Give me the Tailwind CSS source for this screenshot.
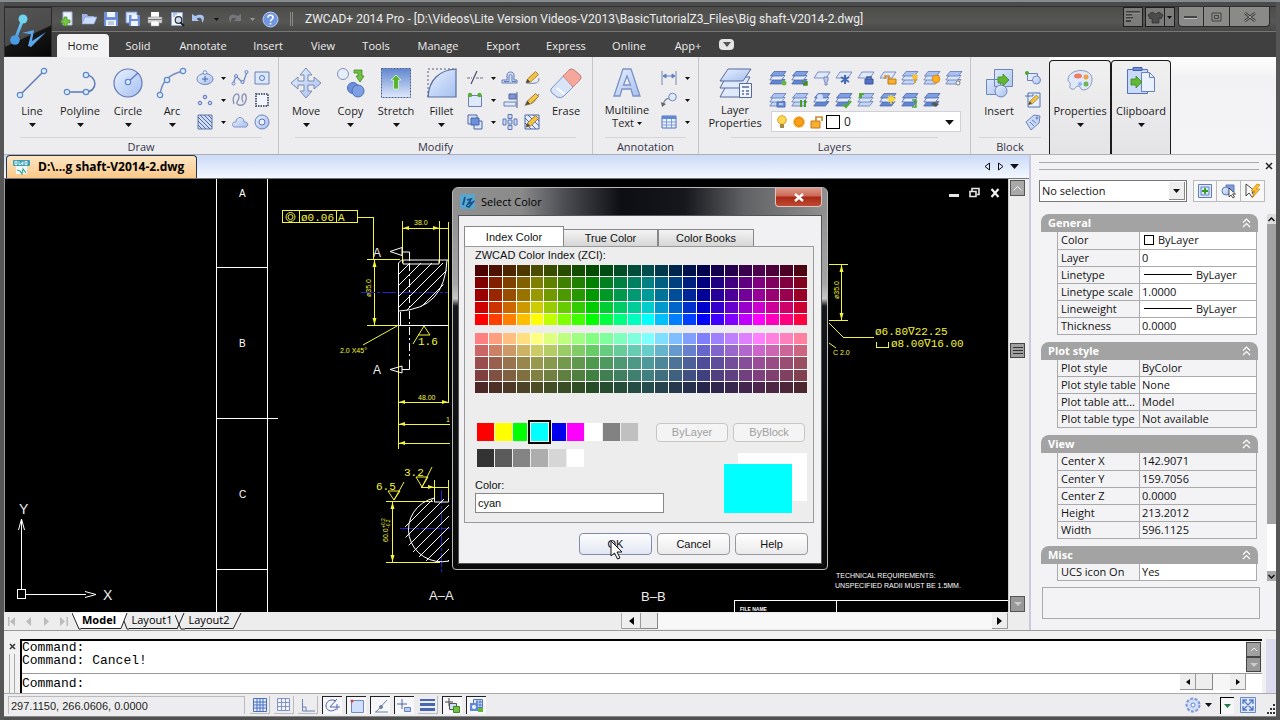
<!DOCTYPE html>
<html lang="en">
<head>
<meta charset="utf-8">
<title>ZWCAD+ 2014 Pro</title>
<script src="https://cdn.jsdelivr.net/npm/@tailwindcss/browser@4"></script>
</head>
<body class="bg-[#555] font-['Open_Sans',sans-serif] text-[11px] leading-4 text-[#1d1d1d]">

<!-- Shared icon parts -->
<svg class="absolute h-0 w-0 overflow-hidden" aria-hidden="true">
  <defs>
    <linearGradient id="gb" x1="0" y1="0" x2="1" y2="1"><stop offset="0" stop-color="#e8f0ff"/><stop offset="1" stop-color="#a6c0f0"/></linearGradient>
    <linearGradient id="gd" x1="0" y1="0" x2="0" y2="1"><stop offset="0" stop-color="#5f86cf"/><stop offset="1" stop-color="#dfe9fb"/></linearGradient>
    <linearGradient id="gz" x1="0" y1="0" x2="0" y2="1"><stop offset="0" stop-color="#6fd6f5"/><stop offset="1" stop-color="#4a93e0"/></linearGradient>
    <symbol id="dn" viewBox="0 0 7 4"><path d="M0 0h7L3.5 4z" fill="#111"/></symbol>
    <symbol id="stack" viewBox="0 0 18 18"><g stroke="#6478b0" stroke-width=".8"><path d="M4 10.500h12l-3.500 4.500H.8z" fill="#c4d5f7"/><path d="M4 6.500h12L12.500 11H.8z" fill="#d9e5fb"/><path d="M5 2.500h12L13.500 7H1.500z" fill="#a9c2f2"/></g></symbol>
    <symbol id="stackd" viewBox="0 0 18 18"><g stroke="#4f66a8" stroke-width=".8"><path d="M4 10.500h12l-3.500 4.500H.8z" fill="#5f86d4"/><path d="M4 6.500h12L12.500 11H.8z" fill="#e4edff"/><path d="M5 2.500h12L13.500 7H1.500z" fill="#7c9ee2"/></g></symbol>
    <symbol id="sheet" viewBox="0 0 18 18"><path d="M5 3h12l-4 6H1z" fill="#dfe9fc" stroke="#7d8fc4"/></symbol>
    <symbol id="pencil" viewBox="0 0 18 18"><path d="M3 14l1.500-4 8-7.500 3 3-8 7.500z" fill="#f5c443" stroke="#8b6a2a" stroke-width=".8"/><path d="M3 14l1.500-4 2.500 2.700z" fill="#4a4a4a"/></symbol>
    <symbol id="chev" viewBox="0 0 9 10"><path d="M1 4.500 4.500 1 8 4.500M1 9l3.500-3.500L8 9" fill="none" stroke="#fff" stroke-width="1.200"/></symbol>
  </defs>
</svg>

<div class="flex min-h-screen flex-col border-t-2 border-[#858b8c] bg-[#565656] pr-1 pl-1">
  <div class="h-[5px] border-b border-[#303030] bg-[#4b4b4b]"></div>

  <!-- Title bar and ribbon tabs -->
  <header class="flex h-[50px] bg-[#404040] text-[#ececec]">
    <button class="w-12 shrink-0 border border-[#2c2c2c] bg-[linear-gradient(155deg,#565656_0%,#4a4a4a_55%,#161616_57%,#060606_100%)]" aria-label="Application menu">
      <svg viewBox="0 0 46 48" class="h-full w-full"><path d="M18 11 10 32" stroke="url(#gz)" stroke-width="3"/><circle cx="18" cy="11" r="4.500" fill="#6fd2ee"/><circle cx="10" cy="32" r="4.800" fill="#4b9be4"/><path d="M17 26 28 22 25 36 40 24" fill="none" stroke="#4a90dc" stroke-width="0"/><path d="m17 25 12-3-2 11 14-9-15 15-3-1 3-12z" fill="#5aa6ea"/></svg>
    </button>
    <div class="flex min-w-0 flex-1 flex-col">
      <div class="flex h-[25px] items-center border-b border-[#777] bg-[linear-gradient(#4c4c4a,#565654_60%,#484846)] pl-1">
        <button class="flex w-[22px] justify-center" aria-label="New"><svg width="16" height="16" viewBox="0 0 16 16"><path d="M4 1h9v13H4z" fill="#edf2ff" stroke="#aab8d8"/><path d="M2 9h3V6h3v3h3v3H8v3H5v-3H2z" fill="#7ac943" stroke="#3c8a1c" stroke-width=".7"/></svg></button>
        <button class="flex w-[22px] justify-center" aria-label="Open"><svg width="16" height="16" viewBox="0 0 16 16"><path d="M1 3h5l1 2h6v8H1z" fill="#9db4e6"/><path d="M4 6h12l-3 7H1z" fill="#cddcfa" stroke="#7f98d0" stroke-width=".6"/></svg></button>
        <button class="flex w-[22px] justify-center" aria-label="Save"><svg width="16" height="16" viewBox="0 0 16 16"><path d="M1 1h14v14H1z" fill="#6d8fd8"/><path d="M4 1h8v5H4zM3 9h10v6H3z" fill="#eff4ff"/><path d="M5 11h6M5 13h6" stroke="#8aa0d0"/></svg></button>
        <button class="flex w-[22px] justify-center" aria-label="Save as"><svg width="16" height="16" viewBox="0 0 16 16"><path d="M1 1h11v11H1z" fill="#dfe8fc" stroke="#6d8fd8"/><path d="M4 4h11v11H4z" fill="#6d8fd8"/><path d="M6.500 4h6v4h-6zM6 10h7v5H6z" fill="#eff4ff"/></svg></button>
        <button class="flex w-[22px] justify-center" aria-label="Print"><svg width="16" height="16" viewBox="0 0 16 16"><path d="M4 1h8v5H4z" fill="#fff"/><path d="M1 6h14v6H1z" fill="#d6d6d6" stroke="#888" stroke-width=".6"/><path d="M1.500 8.500h13" stroke="#777"/><path d="M4 10h8v5H4z" fill="#fff" stroke="#999" stroke-width=".5"/></svg></button>
        <button class="flex w-[22px] justify-center" aria-label="Print preview"><svg width="16" height="16" viewBox="0 0 16 16"><path d="M2.500 1.500h11v13h-11z" fill="#f4f7ff" stroke="#8fa6dc"/><path d="M4 3h4M4 5h2" stroke="#6d8fd8"/><circle cx="9.500" cy="9" r="3.300" fill="#cfdcf4" stroke="#333" stroke-width="1.200"/><path d="M11.500 11.500 15 15" stroke="#222" stroke-width="2"/></svg></button>
        <button class="flex w-[22px] justify-center" aria-label="Undo"><svg width="16" height="16" viewBox="0 0 16 16"><path d="M1 3v7h7L5.500 7.500C9 5.500 11.500 7 11 12c4-5 2-11-7-7z" fill="#a8c4f5"/></svg></button>
        <button class="flex w-3 justify-center" aria-label="Undo list"><svg width="5" height="3"><use href="#dn"/></svg></button>
        <button class="flex w-6 justify-center opacity-50" aria-label="Redo"><svg width="16" height="16" viewBox="0 0 16 16"><path d="M15 3v7H8l2.500-2.500C7 5.500 4.500 7 5 12 1 7 3 1 12 5z" fill="#9c9ca8"/></svg></button>
        <button class="flex w-3 justify-center" aria-label="Redo list"><svg width="5" height="3"><path d="M0 0h5L2.500 3z" fill="#999"/></svg></button>
        <button class="flex w-6 justify-center" aria-label="Help"><svg width="17" height="17" viewBox="0 0 17 17"><circle cx="8.500" cy="8.500" r="7.500" fill="#7297de" stroke="#b9cdf6"/><path d="M6 6.500c0-3 5-3 5 0 0 2-2.500 2-2.500 4M8.500 12v1.500" fill="none" stroke="#fff" stroke-width="1.600"/></svg></button>
        <span class="ml-2 h-3.5 w-[3px] border-x border-[#8a8a8a]"></span>
        <h1 class="ml-3 flex-1 truncate font-['Roboto',sans-serif] text-xs">ZWCAD+ 2014 Pro - [D:\Videos\Lite Version Videos-V2013\BasicTutorialZ3_Files\Big shaft-V2014-2.dwg]</h1>
        <div class="mr-1.5 flex h-5 self-start">
          <button class="mr-0.5 flex w-5 items-center justify-center border border-[#1f1f1f] bg-[#7c7c7a]" aria-label="Ribbon layout"><svg width="14" height="14" viewBox="0 0 14 14"><path d="M0 2h14M0 5h6M0 8h7M0 11h5" stroke="#2a2a2a" stroke-width="1.500"/><path d="M0 3h14M0 6h6M0 9h7" stroke="#b5b5b5" stroke-width=".6"/></svg></button>
          <button class="flex w-5 items-center justify-center border border-[#1f1f1f] bg-[#7c7c7a]" aria-label="Skin"><svg width="17" height="13" viewBox="0 0 17 13"><path d="M5 1 1 4l2 4 2-1v5h7V7l2 1 2-4-4-3-3.500 2z" fill="#4b4b4b" stroke="#222" stroke-width=".6"/></svg></button>
          <button class="mr-[3px] flex w-2.5 items-center justify-center border border-l-0 border-[#1f1f1f] bg-[#7c7c7a]" aria-label="Skin list"><svg width="5" height="3"><use href="#dn"/></svg></button>
          <button class="flex w-[26px] items-center justify-center rounded-bl border border-t-0 border-[#2a2a2a] bg-[#8a8a88]" aria-label="Minimize"><svg width="14" height="4"><path d="M0 1h13v2H0z" fill="#444"/><path d="M0 3h13v1H0z" fill="#bbb"/></svg></button>
          <button class="flex w-[26px] items-center justify-center border border-t-0 border-l-0 border-[#2a2a2a] bg-[#8a8a88]" aria-label="Maximize"><svg width="11" height="10" viewBox="0 0 11 10"><path d="M1 1h9v8H1zM3.500 3.500h4v3h-4z" fill="none" stroke="#444"/></svg></button>
          <button class="flex w-10 items-center justify-center rounded-br border border-t-0 border-l-0 border-[#2a2a2a] bg-[#8a8a88]" aria-label="Close"><svg width="12" height="10" viewBox="0 0 12 10"><path d="m1 1 10 8M11 1 1 9" stroke="#333" stroke-width="2.500"/><path d="m1 1 10 8M11 1 1 9" stroke="#aaa"/></svg></button>
        </div>
      </div>
      <nav class="flex flex-1 items-end pl-[5px]">
        <button class="h-[23px] w-[52px] rounded-t bg-[#f3f3f4] text-[#222]">Home</button>
        <button class="h-[23px] w-[58px]">Solid</button>
        <button class="h-[23px] w-[72px]">Annotate</button>
        <button class="h-[23px] w-[58px]">Insert</button>
        <button class="h-[23px] w-[52px]">View</button>
        <button class="h-[23px] w-[54px]">Tools</button>
        <button class="h-[23px] w-[70px]">Manage</button>
        <button class="h-[23px] w-[60px]">Export</button>
        <button class="h-[23px] w-[66px]">Express</button>
        <button class="h-[23px] w-[60px]">Online</button>
        <button class="h-[23px] w-[58px]">App+</button>
        <button class="mb-[7px] ml-0.5 flex h-[11px] w-[15px] items-center justify-center rounded-sm bg-[#e6e6e6]" aria-label="Minimize ribbon"><svg width="8" height="5"><path d="M0 0h8L4 5z" fill="#555"/></svg></button>
      </nav>
    </div>
  </header>

  <!-- Ribbon -->
  <section class="flex h-[98px] border-b border-[#b0b0b0] bg-[linear-gradient(#fff,#f2f2f4_20%,#f4f4f6)]" aria-label="Ribbon">
    <div class="flex w-[275px] flex-col border-r border-[#c6c6c8] bg-[#ededef]">
      <div class="flex flex-1 pt-2.5 pl-[5px]">
        <button class="flex w-[46px] flex-col items-center gap-1"><svg width="32" height="32" viewBox="0 0 32 32"><path d="M4 28 28 4" stroke="#5c78b8" stroke-width="1.500"/><g fill="#dcebff" stroke="#5c8ac8" stroke-width="1.200"><circle cx="4" cy="28" r="2.700"/><circle cx="28" cy="4" r="2.700"/></g></svg><span>Line</span><svg width="7" height="4"><use href="#dn"/></svg></button>
        <button class="flex w-[50px] flex-col items-center gap-1"><svg width="34" height="32" viewBox="0 0 34 32"><path d="M4 25h18C36 25 34 8 23 8" fill="none" stroke="#5c78b8" stroke-width="1.500"/><g fill="#dcebff" stroke="#5c8ac8" stroke-width="1.200"><circle cx="4" cy="25" r="2.700"/><circle cx="23" cy="25" r="2.700"/><circle cx="23" cy="8" r="2.700"/></g></svg><span>Polyline</span><svg width="7" height="4"><use href="#dn"/></svg></button>
        <button class="flex w-[46px] flex-col items-center gap-1"><svg width="32" height="32" viewBox="0 0 32 32"><circle cx="16" cy="16" r="14" fill="url(#gb)" stroke="#5f7ab5" stroke-width="1.200"/><path d="M16 15 26 6" stroke="#5c78b8" stroke-width="1.200"/><circle cx="16" cy="15" r="2.700" fill="#dcebff" stroke="#5c8ac8" stroke-width="1.200"/></svg><span>Circle</span><svg width="7" height="4"><use href="#dn"/></svg></button>
        <button class="flex w-[42px] flex-col items-center gap-1"><svg width="32" height="32" viewBox="0 0 32 32"><path d="M4 28Q6 8 28 4" fill="none" stroke="#7a90c0" stroke-width="1.500"/><g fill="#dcebff" stroke="#5c8ac8" stroke-width="1.200"><circle cx="4" cy="28" r="2.700"/><circle cx="11" cy="13" r="2.700"/><circle cx="27" cy="4" r="2.700"/></g></svg><span>Arc</span><svg width="7" height="4"><use href="#dn"/></svg></button>
        <div class="grid grid-cols-[24px_12px_22px_22px] grid-rows-[22px_22px_22px] place-items-center self-start">
          <button aria-label="Ellipse"><svg width="18" height="18" viewBox="0 0 18 18"><ellipse cx="9" cy="10" rx="8" ry="5.500" fill="url(#gb)" stroke="#7488bd"/><path d="M9 7v6M6 10h6" stroke="#445fa8"/><circle cx="9" cy="3.500" r="1.800" fill="#fff" stroke="#6488c8"/></svg></button>
          <button aria-label="Ellipse list"><svg width="5" height="3"><use href="#dn"/></svg></button>
          <button aria-label="Spline"><svg width="18" height="18" viewBox="0 0 18 18"><path d="M2 15 5 7l4 4 3 3 4-11" fill="none" stroke="#7488bd" stroke-width="1.300"/><g fill="#dce8ff" stroke="#4f70bc" stroke-width=".8"><circle cx="2.500" cy="14.500" r="1.500"/><circle cx="5" cy="7" r="1.500"/><circle cx="11.500" cy="13" r="1.500"/><circle cx="15.500" cy="3" r="1.500"/></g></svg></button>
          <button aria-label="Rectangle"><svg width="18" height="18" viewBox="0 0 18 18"><path d="M2 3h14v12H2z" fill="#dbe7fc" stroke="#6a80b8"/><circle cx="9" cy="9" r="2.500" fill="none" stroke="#5878c4"/></svg></button>
          <button aria-label="Point"><svg width="18" height="18" viewBox="0 0 18 18"><g fill="#b9cef8" stroke="#5f78b8"><circle cx="9" cy="6" r="1.800"/><circle cx="4" cy="12" r="1.800"/><circle cx="14" cy="12" r="1.800"/></g></svg></button>
          <button aria-label="Point list"><svg width="5" height="3"><use href="#dn"/></svg></button>
          <button aria-label="Freehand"><svg width="18" height="18" viewBox="0 0 18 18"><path d="M3 13C0 3 8 0 8 6c0 4-5 6 0 8 6 2 9-7 6-11-3-1-4 5-2 8" fill="none" stroke="#8b93b8" stroke-width="1.400"/></svg></button>
          <button aria-label="Boundary"><svg width="18" height="18" viewBox="0 0 18 18"><path d="M3 3h12v12H3z" fill="#f3f6ff" stroke="#55607f" stroke-width="2" stroke-dasharray="1.500 1"/></svg></button>
          <button aria-label="Hatch"><svg width="18" height="18" viewBox="0 0 18 18"><path d="M2 2h14v14H2z" fill="#cfdcf6" stroke="#5f74a8"/><path d="m2 12 4 4M2 8l8 8M2 4l12 12M4 2l12 12M8 2l8 8M12 2l4 4" stroke="#4f66a0"/></svg></button>
          <button aria-label="Hatch list"><svg width="5" height="3"><use href="#dn"/></svg></button>
          <button aria-label="Revision cloud"><svg width="18" height="18" viewBox="0 0 18 18"><path d="M3 14c-3-2-1-6 2-5 0-6 8-6 8 0 4-1 5 4 2 5z" fill="url(#gb)" stroke="#8694c0"/></svg></button>
          <button aria-label="Donut"><svg width="18" height="18" viewBox="0 0 18 18"><circle cx="9" cy="9" r="7" fill="url(#gb)" stroke="#6a80b8"/><circle cx="9" cy="9" r="3" fill="#eee" stroke="#5878c4"/></svg></button>
        </div>
      </div>
      <h2 class="mx-4 border-t border-[#d6d6d8] pt-0.5 text-center leading-[14px] text-[#34344a]">Draw</h2>
    </div>

    <div class="flex w-[314px] flex-col border-r border-[#c6c6c8] bg-[#ededef]">
      <div class="flex flex-1 pt-2.5 pl-1">
        <button class="flex w-[46px] flex-col items-center gap-1"><svg width="32" height="32" viewBox="0 0 32 32"><path d="m16 1 6 7h-4v6h6v-4l7 6-7 6v-4h-6v6h4l-6 7-6-7h4v-6H8v4l-7-6 7-6v4h6V8h-4z" fill="url(#gb)" stroke="#7c8bb0"/></svg><span>Move</span><svg width="7" height="4"><use href="#dn"/></svg></button>
        <button class="flex w-[43px] flex-col items-center gap-1"><svg width="32" height="32" viewBox="0 0 32 32"><circle cx="8" cy="7" r="5.500" fill="#e6eefb" stroke="#8093bd"/><circle cx="18" cy="21" r="5.500" fill="#6c90dc" stroke="#4b6cb8"/><circle cx="23" cy="24" r="6" fill="#7f9fe4" stroke="#4b6cb8"/><path d="M19 3h8v6h2l-4 6-4-6h2V6h-4z" fill="#72c043" stroke="#3d8a20" stroke-width=".8"/></svg><span>Copy</span><svg width="7" height="4"><use href="#dn"/></svg></button>
        <button class="flex w-12 flex-col items-center gap-1"><svg width="32" height="32" viewBox="0 0 32 32"><path d="M1.500 1.500h29v29h-29z" fill="url(#gd)" stroke="#44608f" stroke-dasharray="2 1"/><path d="m16 8 5 5h-2.500v9h-5v-9H11z" fill="#59b32e" stroke="#e8ffe0" stroke-width=".7"/></svg><span>Stretch</span><svg width="7" height="4"><use href="#dn"/></svg></button>
        <button class="flex w-[43px] flex-col items-center gap-1"><svg width="32" height="32" viewBox="0 0 32 32"><path d="M2 30C3 13 13 3 30 2v28z" fill="url(#gb)" stroke="#55709f" stroke-width="1.200"/><path d="M2 30V2h28" fill="none" stroke="#55607f" stroke-dasharray="2 2"/></svg><span>Fillet</span><svg width="7" height="4"><use href="#dn"/></svg></button>
        <div class="grid grid-cols-[24px_12px_22px_22px] grid-rows-[22px_22px_22px] place-items-center self-start">
          <button aria-label="Trim"><svg width="18" height="18" viewBox="0 0 18 18"><path d="M1 9h5M10 9h7" stroke="#6a7590" stroke-dasharray="3 1"/><path d="m5 15 6-13" stroke="#44506f" stroke-width="1.200"/></svg></button>
          <button aria-label="Trim list"><svg width="5" height="3"><use href="#dn"/></svg></button>
          <button aria-label="Offset"><svg width="18" height="18" viewBox="0 0 18 18"><path d="M1 14h15v-3h-3V6c0-4-7-4-7 0v5H1z" fill="#d7e3fa" stroke="#5f78b4"/><path d="M3 12.500h5V7c0-2 3-2 3 0v5.500h4" fill="none" stroke="#5f78b4"/></svg></button>
          <button aria-label="Edit polyline"><svg width="18" height="18"><path d="M4 14q13 2 12-5" fill="none" stroke="#6a80b8"/><use href="#pencil"/></svg></button>
          <button aria-label="Explode"><svg width="18" height="18" viewBox="0 0 18 18"><path d="M2.500 4.500h13v11h-13z" fill="#dfe9fc" stroke="#6a80b8"/><g fill="#58b030"><circle cx="4" cy="4" r="2.200"/><circle cx="13.500" cy="4" r="2.200"/></g></svg></button>
          <button aria-label="Explode list"><svg width="5" height="3"><use href="#dn"/></svg></button>
          <button aria-label="Align"><svg width="18" height="18" viewBox="0 0 18 18"><path d="M16 1v16" stroke="#55607f"/><path d="M8 3h7v5H8z" fill="#7c96d4" stroke="#4c64a4"/><path d="M3 11h12v4H3z" fill="#dfe9fc" stroke="#6a80b8"/></svg></button>
          <button aria-label="Edit spline"><svg width="18" height="18"><path d="M2 15q3-9 5-4t9-8" fill="none" stroke="#777"/><use href="#pencil"/></svg></button>
          <button aria-label="Draw order"><svg width="18" height="18" viewBox="0 0 18 18"><g stroke="#4a64a8"><path d="M2 2h9v9H2z" fill="#dce7fc"/><path d="M8 8h8v8H8z" fill="#dce7fc"/><path d="M5 5h8v7H5z" fill="#6c90dc"/></g></svg></button>
          <button aria-label="Draw order list"><svg width="5" height="3"><use href="#dn"/></svg></button>
          <button aria-label="Mirror"><svg width="18" height="18" viewBox="0 0 18 18"><g fill="#c9d9f8" stroke="#5f78b4"><path d="M7 1.500h4v4H7zM7 7h4v4H7zM7 12.500h4v4H7zM2 6h3v6H2zM13 6h3v6h-3z"/></g></svg></button>
          <button aria-label="Edit hatch"><svg width="18" height="18"><path d="M2 2h14v14H2z" fill="#e5ecfa" stroke="#4f66a8"/><path d="m2 10 6 6M2 5l11 11M5 2l11 11M10 2l6 6" stroke="#4f66a8"/><use href="#pencil"/></svg></button>
        </div>
        <button class="flex w-[46px] flex-col items-center gap-1"><svg width="34" height="32" viewBox="0 0 34 32"><path d="M2 22 20 3q2-2 5 0l6 5q2 2 0 5L15 29q-3 3-7 1l-5-4q-2-2-1-4z" fill="#d8e4fa" stroke="#7f92c4"/><path d="m14 9 6-6q2-2 5 0l6 5q2 2 0 5l-7 7z" fill="#f5a79c" stroke="#d0847c"/><path d="m8 21 7 6" stroke="#fff" stroke-width="2"/></svg><span>Erase</span></button>
      </div>
      <h2 class="mx-4 border-t border-[#d6d6d8] pt-0.5 text-center leading-[14px] text-[#34344a]">Modify</h2>
    </div>

    <div class="flex w-[106px] flex-col border-r border-[#c6c6c8] bg-[#ededef]">
      <div class="flex flex-1 pt-2.5 pl-1">
        <button class="flex w-[60px] flex-col items-center gap-1"><svg width="30" height="32" viewBox="0 0 30 32"><path d="M11 2h8l9 27h-7l-2-7h-9l-2 7H2zm4 7-3.500 9h7z" fill="url(#gb)" stroke="#7c92c4" stroke-width="1.300" fill-rule="evenodd"/></svg><span class="leading-[13px]">Multiline<br>Text <svg class="mb-0.5 inline" width="5" height="3"><use href="#dn"/></svg></span></button>
        <div class="grid grid-cols-[24px_12px] grid-rows-[22px_22px_22px] place-items-center self-start">
          <button aria-label="Dimension"><svg width="18" height="18" viewBox="0 0 18 18"><path d="M2 2v14M16 2v14" stroke="#7686a8"/><path d="M3 7h12M3 7l3-2v4zM15 7l-3-2v4z" stroke="#6080c0" fill="#6080c0"/></svg></button>
          <button aria-label="Dimension list"><svg width="5" height="3"><use href="#dn"/></svg></button>
          <button aria-label="Leader"><svg width="18" height="18" viewBox="0 0 18 18"><path d="M3 14Q5 6 10 8" fill="none" stroke="#7686a8" stroke-width="1.300"/><path d="m1 11 1 5 4-3z" fill="#666"/><circle cx="12.500" cy="6" r="3.800" fill="#dfe9fc" stroke="#7686b8"/></svg></button>
          <button aria-label="Leader list"><svg width="5" height="3"><use href="#dn"/></svg></button>
          <button aria-label="Table"><svg width="18" height="18" viewBox="0 0 18 18"><path d="M2 3h14v12H2z" fill="#eaf1ff" stroke="#4f70b8"/><path d="M2 3h14v3H2z" fill="#5f88d4"/><path d="M2 9h14M2 12h14M6.500 6v9M11.500 6v9" stroke="#7f9ad4"/></svg></button>
          <button aria-label="Table list"><svg width="5" height="3"><use href="#dn"/></svg></button>
        </div>
      </div>
      <h2 class="mx-3 border-t border-[#d6d6d8] pt-0.5 text-center leading-[14px] text-[#34344a]">Annotation</h2>
    </div>

    <div class="flex w-[272px] flex-col border-r border-[#c6c6c8] bg-[#ededef]">
      <div class="flex flex-1 pt-2.5 pl-1">
        <button class="flex w-16 flex-col items-center gap-1"><svg width="34" height="32" viewBox="0 0 34 32"><g fill="#dfe9fc" stroke="#54699c"><path d="M8 19h24l-7 11H2z"/><path d="M8 10h24l-6 11H2z"/><path d="M10 2h23l-8 12H2z" fill="url(#gb)"/></g><path d="M21.500 16.500h12v14h-12z" fill="#f0f5ff" stroke="#54699c"/><path d="M24 20h7M24 24h2M28 24h3M24 27h2M28 27h3" stroke="#54699c" stroke-width="1.400"/></svg><span class="leading-[13px]">Layer<br>Properties</span></button>
        <div class="flex flex-col">
          <div class="grid grid-cols-[repeat(9,22px)] grid-rows-[22px_22px] place-items-center">
            <button aria-label="Layer state"><svg width="18" height="18"><use href="#stackd"/><circle cx="15" cy="14" r="2.500" fill="#68b840"/></svg></button>
            <button aria-label="Layer walk"><svg width="18" height="18"><use href="#stackd"/><path d="m11 12 5 4M16 12v4h-4" stroke="#3f9a20" stroke-width="1.500"/></svg></button>
            <button aria-label="Layer off"><svg width="18" height="18"><use href="#sheet"/><path d="M11 8h4v3l-1 2v3h-2v-3l-1-2z" fill="#bccdf2" stroke="#7888b8"/></svg></button>
            <button aria-label="Layer freeze"><svg width="18" height="18"><use href="#sheet"/><path d="M10 6v9M6 8l8 5M14 8l-8 5" stroke="#3f68b8" stroke-width="2"/></svg></button>
            <button aria-label="Layer lock"><svg width="18" height="18"><use href="#sheet"/><path d="M8 10h8v5H8z" fill="#4f74c4" stroke="#3a559c"/><path d="M10 10V8h4v2" fill="none" stroke="#3a559c" stroke-width="1.500"/></svg></button>
            <button aria-label="Layer unlock"><svg width="18" height="18"><use href="#sheet"/><path d="M9 10h8v5H9z" fill="#f8b030" stroke="#c07a10"/><path d="M6 10V7h4v3" fill="none" stroke="#d08a20" stroke-width="1.500"/></svg></button>
            <button aria-label="Turn all layers on"><svg width="18" height="18"><use href="#stack"/><circle cx="14" cy="8" r="2.700" fill="#ffc030"/><path d="M13 11h2v3h-2z" fill="#d8a040"/></svg></button>
            <button aria-label="Thaw all layers"><svg width="18" height="18"><use href="#stack"/><circle cx="13" cy="10" r="3.800" fill="#ffb020" stroke="#d88a10"/></svg></button>
            <button aria-label="Layer isolate"><svg width="18" height="18"><use href="#stack"/><circle cx="13" cy="14" r="2" fill="#fff" stroke="#777"/></svg></button>
            <button aria-label="Copy to layer"><svg width="18" height="18"><use href="#stack"/><path d="M8 11h8v5H8z" fill="#6d90dc" stroke="#4a68b0"/><path d="M10 13h4" stroke="#fff"/></svg></button>
            <button aria-label="Layer match"><svg width="18" height="18"><use href="#stack"/><path d="M10 9v7M14 9v7" stroke="#42a028" stroke-width="2"/></svg></button>
            <button aria-label="Current layer"><svg width="18" height="18"><use href="#stackd"/><circle cx="7" cy="6" r="3" fill="#cfdefc"/></svg></button>
            <button aria-label="Make current"><svg width="18" height="18"><use href="#stackd"/><path d="m8 13 3 3 5-6" fill="none" stroke="#52b02c" stroke-width="2"/></svg></button>
            <button aria-label="Layer previous"><svg width="18" height="18"><use href="#stack"/><path d="M2 2h5v2H5v3H2z" fill="#4caa2c"/></svg></button>
            <button aria-label="New viewport layer"><svg width="18" height="18"><use href="#stackd"/><path d="M12 4v9M8 8h9M9 5l6 6M15 5l-6 6" stroke="#ffd83a" stroke-width="1.500"/></svg></button>
            <button aria-label="Layer merge"><svg width="18" height="18"><use href="#stackd"/><path d="M11 9h4v7h-4" fill="none" stroke="#4caa2c" stroke-width="1.500"/></svg></button>
            <button aria-label="Layer delete"><svg width="18" height="18"><use href="#stackd"/><path d="m8 13 5 3 3-3-5-2z" fill="#555"/></svg></button>
          </div>
          <div class="ml-1 flex h-[21px] w-[190px] items-center gap-1 border border-[#d0d0d8] bg-white px-1">
            <svg width="12" height="16" viewBox="0 0 12 16"><circle cx="6" cy="6" r="4.300" fill="#ffd750" stroke="#e0a020"/><path d="M4 10h4v4H4z" fill="#a88848"/></svg>
            <svg width="14" height="14" viewBox="0 0 14 14"><circle cx="7" cy="7" r="6" fill="#ffc65a"/><circle cx="7" cy="7" r="4.300" fill="#ff9f18" stroke="#cf7c10"/></svg>
            <svg width="14" height="14" viewBox="0 0 14 14"><path d="M1 6h9v7H1z" fill="#f9ae32" stroke="#bf7a18"/><path d="M6 6V2h6v4" fill="none" stroke="#c98a28" stroke-width="1.700"/></svg>
            <span class="-ml-0.5 h-3.5 w-3.5 border border-black bg-white"></span>
            <div class="relative flex flex-1"><select class="w-full appearance-none bg-transparent text-xs outline-none" aria-label="Current layer name"><option>0</option></select><svg class="pointer-events-none absolute top-1.5 right-0.5" width="9" height="5"><use href="#dn"/></svg></div>
          </div>
        </div>
      </div>
      <h2 class="mx-8 border-t border-[#d6d6d8] pt-0.5 text-center leading-[14px] text-[#34344a]">Layers</h2>
    </div>

    <div class="flex w-[78px] flex-col bg-[#ededef]">
      <div class="flex flex-1 pt-2.5 pl-1">
        <button class="flex w-[48px] flex-col items-center gap-1"><svg width="32" height="32" viewBox="0 0 32 32"><g fill="url(#gb)" stroke="#6f84b8"><path d="M11.500 2.500h18v17h-18zM3.500 12.500h14v15h-14z"/><circle cx="18" cy="24" r="6"/></g><path d="M15 10h5V7l6 6-6 6v-3h-5z" fill="#62b834" stroke="#3a8a1c" stroke-width=".8"/></svg><span>Insert</span></button>
        <div class="grid grid-cols-[20px] grid-rows-[22px_22px_22px] place-items-center self-start">
          <button aria-label="Create block"><svg width="18" height="18" viewBox="0 0 18 18"><path d="M3.500 4.500h10v7h-10z" fill="#dfe9fc" stroke="#6a80b8"/><circle cx="12.500" cy="11" r="4" fill="url(#gb)" stroke="#7488bd"/><circle cx="3" cy="4" r="2" fill="#4aa828"/></svg></button>
          <button aria-label="Edit block"><svg width="18" height="18"><path d="M4 2h12v14H4z" fill="#e8effd" stroke="#5070b0"/><path d="M1 5h8V3" fill="none" stroke="#5070b0"/><use href="#pencil" x="2" y="2" width="15" height="15"/></svg></button>
          <button aria-label="Block attributes"><svg width="18" height="18" viewBox="0 0 18 18"><path d="M2 9 10 2l6 1-1 7-8 7z" fill="#c8d9f8" stroke="#6a84bc"/><circle cx="13" cy="5" r="1" fill="#fff" stroke="#5a70a8"/><path d="m6 9 4 4M8 7l4 3" stroke="#6a84bc"/></svg></button>
        </div>
      </div>
      <h2 class="mx-2 border-t border-[#d6d6d8] pt-0.5 text-center leading-[14px] text-[#34344a]">Block</h2>
    </div>
    <button class="mt-[3px] flex w-[62px] flex-col items-center gap-1 rounded-t border border-b-0 border-[#1b1b1b] bg-[linear-gradient(#f0f0f1,#e4e4e6)] pt-1.5"><svg width="30" height="32" viewBox="0 0 30 32"><path d="M3 13C3 1 27 0 27 12c0 7-4 11-9 11-3 0-2-4-5-4s-2 4-6 3-1-4-2-6-2-1-2-3z" fill="#dfe9fc" stroke="#8a98bc"/><ellipse cx="13" cy="9" rx="4" ry="2.500" fill="#ef7c60"/><circle cx="21" cy="10" r="2.500" fill="#f0a040"/><circle cx="21" cy="17" r="2.500" fill="#6fb450"/><circle cx="15" cy="17" r="2" fill="#8fb4f0"/></svg><span>Properties</span><svg width="7" height="4"><use href="#dn"/></svg></button>
    <button class="mt-[3px] flex w-[60px] flex-col items-center gap-1 rounded-t border border-b-0 border-[#1b1b1b] bg-[linear-gradient(#f0f0f1,#e4e4e6)] pt-1.5"><svg width="32" height="32" viewBox="0 0 32 32"><path d="M2.500 2.500h20v24h-20z" fill="#c9dafa" stroke="#5470b8"/><path d="M8 .5h9v3H8z" fill="#6f8fd8" stroke="#4460a8"/><path d="M16.500 5.500h8l5 5v14h-13z" fill="#eaf1fe" stroke="#6a80b8"/><path d="M24.500 5.500v5h5" fill="none" stroke="#6a80b8"/><path d="M6 12h5V9l6 6-6 6v-3H6z" fill="#62b834" stroke="#3a8a1c" stroke-width=".8"/></svg><span>Clipboard</span><svg width="7" height="4"><use href="#dn"/></svg></button>
    <div class="flex-1"></div>
  </section>

  <!-- Workspace -->
  <main class="flex flex-1 bg-[#f2f2f4]">
    <div class="relative flex min-w-0 flex-1 flex-col">
      <div class="flex h-6 border-b border-[#77777a] bg-[linear-gradient(#cbdaf8,#f3f8ff)]">
        <button class="ml-0.5 flex w-[191px] items-center rounded-t border border-b-0 border-[#26374f] bg-[linear-gradient(#fde6c4,#fbc888)] pl-1.5 text-xs font-bold text-black">
          <svg width="17" height="16" viewBox="0 0 17 16"><path d="M3 5h11v10H3z" fill="#eefafc"/><rect y="1" width="17" height="6" rx="1" fill="#3fa0b8"/><path d="M2 2.500v3h2v-3zM6 2.500v3h1.500l1.500-2V5.500h1v-3M12 5.500h2v-3h-2z" fill="none" stroke="#fff" stroke-width=".9"/><path d="m4 11 3 1 2 3 1-5 3 4" fill="none" stroke="#3fa890" stroke-width="1.200"/></svg>
          <span class="ml-2">D:\...g shaft-V2014-2.dwg</span>
        </button>
        <div class="ml-auto flex items-center gap-[5px] pr-2.5">
          <button aria-label="Previous drawing"><svg width="8" height="9"><path d="M5.500 1v7L1 4.500z" fill="none" stroke="#111"/></svg></button>
          <button aria-label="Next drawing"><svg width="8" height="9"><path d="M1.500 1v7L6 4.500z" fill="none" stroke="#111"/></svg></button>
          <button aria-label="Drawing list"><svg width="9" height="5"><use href="#dn"/></svg></button>
        </div>
      </div>

      <div class="flex flex-1">
        <div class="relative min-w-0 flex-1 overflow-hidden border-l border-[#999] bg-black">
          <svg class="absolute inset-0 h-full w-full" viewBox="5 179 1003 433" preserveAspectRatio="xMinYMin slice" fill="none">
            <defs>
              <clipPath id="c1"><path d="M399 263h48q0 46-48 48z"/></clipPath>
              <clipPath id="c2"><path d="M449 499h-14a33 32 0 1 0 14 62z"/></clipPath>
            </defs>
            <g stroke="#fff" shape-rendering="crispEdges">
              <path d="M216.500 179v433M267.500 179v433M217 267.500h50M217 418.500h61M217 569.500h50"/>
              <path d="M21.500 520v69M17.500 589.500h8v9h-8zM26 594.500h60M734.500 612v-11.500h274M836.500 601v11"/>
            </g>
            <path d="m21.500 519-3 11M21.500 519l3 11M96 594.500l-11-3M96 594.500l-11 3" stroke="#fff"/>
            <g fill="#fff" font-family="Liberation Sans, sans-serif">
              <text x="239" y="197" font-size="10">A</text><text x="239" y="347" font-size="10">B</text><text x="239" y="498" font-size="10">C</text>
            </g>
            <g fill="#eee" font-family="Liberation Sans, sans-serif">
              <text x="19" y="514" font-size="14">Y</text><text x="103" y="600" font-size="14">X</text>
              <text x="373" y="257" font-size="12">A</text><text x="373" y="374" font-size="12">A</text>
              <text x="429" y="600" font-size="13">A–A</text><text x="641" y="601" font-size="13">B–B</text>
            </g>
            <g fill="#fff" font-family="Liberation Sans, sans-serif" font-size="7">
              <text x="836" y="578">TECHNICAL REQUIREMENTS:</text><text x="835" y="588">UNSPECIFIED RADII MUST BE 1.5MM.</text>
              <text x="740" y="611" font-size="5" font-weight="bold">FILE NAME</text>
            </g>
            <!-- dimensions -->
            <g stroke="#f4f43a" shape-rendering="crispEdges">
              <path d="M282.500 210.500h75v12h-75zM299.500 211v12M336.500 211v12M358 217.500h15v42"/>
              <path d="M402.500 221v42M439.500 221v42M403 228.500h46M448.500 222v180M367 259.500h33M374.500 260v65M367 325.500h32"/>
              <path d="M398.500 326v123M399 402.500h50M399 424.500h51M399 443.500h51"/>
              <path d="M386 501.500h47M392.500 502v60M386 562.500h54M421 487.500h28M434.500 480v21M448.500 480v21"/>
              <path d="M829 264.500h19M829 320.500h19M841.500 265v55M843 337.500h31M876.500 342v5h12v-5"/>
            </g>
            <g stroke="#f4f43a">
              <path d="m363 345 34-19M413 344l11-18 6 9h-12M388 491h12l-6 9zM394 500l10-18M416 477h12l-6 10zM422 487l10-20M829 323l14 14"/>
              <circle cx="290.500" cy="217" r="4.500"/><circle cx="290.500" cy="217" r="2.500"/>
              <path d="M829 343l7 5"/>
            </g>
            <g fill="#f4f43a">
              <path d="m403 228 6-2v4zM439 228l-6-2v4zM374.500 260l-2 7h4zM374.500 325l-2-7h4zM399 402l6-2v4zM448 402l-6-2v4zM399 424l6-2v4zM399 443l6-2v4zM392.500 502l-2 7h4zM392.500 562l-2-7h4zM434 487l-6-2v4zM841.500 265l-2 7h4zM841.500 320l-2-7h4z"/>
              <g font-family="Liberation Mono, monospace" font-size="11">
                <text x="301" y="221">ø0.06</text><text x="338" y="221">A</text><text x="418" y="345">1.6</text>
                <text x="376" y="490">6.5</text><text x="404" y="476">3.2</text>
                <text x="875" y="335">ø6.80∇22.25</text><text x="891" y="347">ø8.00∇16.00</text>
              </g>
              <g font-family="Liberation Sans, sans-serif" font-size="7">
                <text x="414" y="225">38.0</text><text x="418" y="400">48.00</text><text x="340" y="353">2.0 X45°</text><text x="833" y="355">C 2.0</text><text x="446" y="422">1</text>
                <text transform="translate(371 297) rotate(-90)">ø35.0</text><text transform="translate(839 299) rotate(-90)">ø35.0</text><text transform="translate(388 542) rotate(-90)">60.0</text>
              </g>
              <g font-family="Liberation Sans, sans-serif" font-size="5"><text transform="translate(385 528) rotate(-90)">+0.2</text><text transform="translate(390 528) rotate(-90)">-0.2</text></g>
            </g>
            <!-- shaft section and profile -->
            <g stroke="#2222c8"><path d="M361 292.500h87M400 528.500h50M441.500 490v82" stroke-dasharray="14 2 3 2"/></g>
            <g stroke="#fff">
              <path d="M398.500 326v-63l3-3h47M398.500 325.500h50M403 260v4h36v-4M447 260q-2 49-48 51M400.500 312v13"/>
              <g clip-path="url(#c1)"><path d="m390 283 40-40M390 294l50-50M390 305l60-60M390 316l60-60M390 327l60-60M390 338l60-60"/></g>
              <path d="M434.500 498v4h14v-4M434.500 498a33 32 0 1 0 14.500 63"/>
              <g clip-path="url(#c2)"><path d="m400 521 50-50M400 532l50-50M400 543l50-50M400 554l50-50M400 565l50-50M400 576l50-50M400 587l50-50M400 598l50-50M400 609l50-50"/></g>
              <path d="M402 247.500v8l-12-4zM402 252h7.500v9M402 366v7l-12-3.500zM402 369.500h7.500v-10"/>
              <path d="M409.500 263v96" stroke-dasharray="8 3 2 3"/>
            </g>
          </svg>
          <div class="absolute top-2 right-2 flex items-center gap-2.5">
            <button aria-label="Minimize drawing"><svg width="10" height="12"><path d="M0 7h10v3H0z" fill="#e8e8e8"/></svg></button>
            <button aria-label="Restore drawing"><svg width="11" height="12" fill="none" stroke="#e8e8e8" stroke-width="1.600"><path d="M3 4V1.500h7v6H8M1 4.500h6v5H1z"/></svg></button>
            <button aria-label="Close drawing"><svg width="10" height="12"><path d="m1.500 2 7 8M8.500 2l-7 8" stroke="#f0f0f0" stroke-width="2.200"/></svg></button>
          </div>
        </div>
        <div class="flex w-[21px] flex-col items-center justify-between border-l border-[#ccc] bg-[#eeeeef] pr-[3px] pt-px">
          <button class="flex h-4 w-[15px] items-center justify-center border border-[#555] bg-[#a9a9a9]" aria-label="Scroll up"><svg width="9" height="5"><path d="m.5 4.500 4-4 4 4" fill="none" stroke="#eee"/></svg></button>
          <button class="mb-[92px] flex h-[15px] w-[15px] items-center justify-center border border-[#444] bg-[#a0a0a0]" aria-label="Vertical scroll thumb"><svg width="10" height="9"><path d="M0 1.500h10M0 4.500h10M0 7.500h10" stroke="#333"/></svg></button>
          <button class="flex h-4 w-[15px] items-center justify-center border border-[#555] bg-[#999]" aria-label="Scroll down"><svg width="8" height="4"><path d="M0 0h8L4 4z" fill="#ccc"/></svg></button>
        </div>
      </div>

      <div class="flex h-[18px] items-center bg-[#ededee] text-black">
        <div class="ml-1 flex w-16 items-center justify-between pr-1" aria-hidden="true">
          <svg width="8" height="9" fill="#bbb"><path d="M0 0h1.500v9H0zM7 0v9L2 4.500z"/></svg>
          <svg width="8" height="9" fill="#bbb"><path d="M6 0v9L1 4.500z"/></svg>
          <svg width="8" height="9" fill="#bbb"><path d="M1 0v9l5-4.500z"/></svg>
          <svg width="8" height="9" fill="#bbb"><path d="M6.500 0H8v9H6.500zM0 0v9l5-4.500z"/></svg>
        </div>
        <svg width="9" height="17" fill="none"><path d="M0 0h9v16H7z" fill="#fff"/><path d="M0 0l7 16h2" stroke="#222"/></svg>
        <button class="-mt-px h-[17px] w-9 border-b border-[#222] bg-white font-bold">Model</button>
        <svg width="12" height="17" fill="none"><path d="M0 0h10L4 16H0z" fill="#fff"/><path d="M0 15.500h4L10 0M7 8l3 8h2" stroke="#222"/></svg>
        <button class="-mt-px h-[17px] w-[46px] border-b border-[#222]">Layout1</button>
        <svg width="10" height="17" fill="none"><path d="M2 16 9 0M0 2l6 14h4M0 15.500h2" stroke="#222"/></svg>
        <button class="-mt-px h-[17px] w-[48px] border-b border-[#222]">Layout2</button>
        <svg width="9" height="17" fill="none"><path d="M0 16 8 0" stroke="#222"/></svg>
        <div class="ml-auto flex h-4 w-[387px] border-l border-[#aaa] bg-[#f8f8f8]">
          <button class="flex w-[19px] items-center justify-center border-r border-b border-[#999] bg-[#eee]" aria-label="Scroll left"><svg width="5" height="8"><path d="M5 0v8L0 4z"/></svg></button>
          <span class="w-[17px] border-r border-b border-[#888] bg-[#ebebeb]"></span>
          <button class="ml-auto flex w-4 items-center justify-center border-r border-b border-[#999] bg-[#eee]" aria-label="Scroll right"><svg width="5" height="8"><path d="M0 0v8l5-4z"/></svg></button>
        </div>
        <div class="w-[21px]"></div>
      </div>

      <!-- Select Color window -->
      <div role="dialog" aria-label="Select Color" class="absolute top-8 left-[448px] w-[376px] rounded-t-md rounded-b border border-[#b8b8b8] bg-[linear-gradient(#8c8c8c,#a5a5a5_25%,#c8c8c8_29%,#14161a_31%,#0a0a0a_100%)] p-[5px] pt-0 font-['Liberation_Sans',sans-serif] text-[#111]">
        <div class="-mx-1 flex h-[27px] items-start rounded-t bg-[linear-gradient(90deg,#909090,#8a8a8a_18%,#4a4c52_30%,#0c0e14_45%,#15171c_62%,#606164_78%,#909090)] pl-1.5 font-['Open_Sans',sans-serif]">
          <svg class="mt-1.5" width="15" height="15" viewBox="0 0 15 15"><path d="M0 0h15v15H0z" fill="#5aa6cc"/><path d="m5 3-2 8M7 6l4-1-3 5 5-2-4 5-3-1" fill="none" stroke="#16508c" stroke-width="1.700"/></svg>
          <h2 class="mt-1.5 ml-1.5 flex-1 text-[11px] text-black">Select Color</h2>
          <button class="mr-1 flex h-[19px] w-[47px] items-center justify-center rounded-b border border-t-0 border-[#e3c3bd] bg-[linear-gradient(#dc9a8c,#cc6654_45%,#a82814_50%,#c04a34)]" aria-label="Close dialog"><svg width="10" height="9"><path d="m1 1 8 7M9 1 1 8" stroke="#fff" stroke-width="2.400"/></svg></button>
        </div>
        <div class="border border-[#555] bg-[#f1f1f3] px-[5px] pt-2.5 pb-2 text-[11px]">
          <div class="flex items-end" role="tablist">
            <button role="tab" aria-selected="true" class="h-5 w-[100px] border border-b-0 border-[#888] bg-white">Index Color</button>
            <button role="tab" class="h-[17px] w-[94px] border border-b-0 border-l-0 border-[#888] bg-[linear-gradient(#f4f4f4,#d6d6d6)]">True Color</button>
            <button role="tab" class="h-[17px] w-[96px] border border-b-0 border-[#888] bg-[linear-gradient(#f4f4f4,#d6d6d6)]">Color Books</button>
          </div>
          <div class="mr-0.5 border border-[#999] bg-[#ededee] pr-1.5 pb-[9px] pl-2.5">
            <p>ZWCAD Color Index (ZCI):</p>
            <div id="palette-vivid" class="mt-0.5 grid h-[60px] grid-cols-[repeat(24,minmax(0,1fr))] gap-px bg-white"></div>
            <div id="palette-soft" class="mt-2 grid h-[60px] grid-cols-[repeat(24,minmax(0,1fr))] gap-px bg-white"></div>
            <div class="mt-[27px] flex items-center">
              <div class="flex h-6 items-center gap-px pl-0.5">
                <button class="h-[18px] w-[17px] bg-[#f00]" aria-label="red"></button>
                <button class="h-[18px] w-[17px] bg-[#ff0]" aria-label="yellow"></button>
                <button class="h-[18px] w-3.5 bg-[#0f0]" aria-label="green"></button>
                <button class="h-6 w-[23px] border-2 border-black bg-[#0ff] ring-1 ring-white ring-inset" aria-label="cyan"></button>
                <button class="h-[18px] w-3.5 bg-[#00e]" aria-label="blue"></button>
                <button class="h-[18px] w-[17px] bg-[#f0f]" aria-label="magenta"></button>
                <button class="h-[18px] w-[17px] bg-white" aria-label="white"></button>
                <button class="h-[18px] w-[17px] bg-[#828282]" aria-label="gray"></button>
                <button class="h-[18px] w-[17px] bg-[#c0c0c0]" aria-label="light gray"></button>
              </div>
              <button disabled class="ml-auto h-[19px] w-[72px] rounded border border-[#c6c6c6] bg-[#f4f4f4] text-[#a0a0a0]">ByLayer</button>
              <button disabled class="mr-0.5 ml-[5px] h-[19px] w-[72px] rounded border border-[#c6c6c6] bg-[#f4f4f4] text-[#a0a0a0]">ByBlock</button>
            </div>
            <div class="flex">
              <div class="flex-1">
                <div class="mt-[5px] flex gap-px pl-0.5">
                  <button class="h-[18px] w-[17px] bg-[#333]" aria-label="250"></button>
                  <button class="h-[18px] w-[17px] bg-[#5b5b5b]" aria-label="251"></button>
                  <button class="h-[18px] w-[17px] bg-[#848484]" aria-label="252"></button>
                  <button class="h-[18px] w-[17px] bg-[#adadad]" aria-label="253"></button>
                  <button class="h-[18px] w-[17px] bg-[#d6d6d6]" aria-label="254"></button>
                  <button class="h-[18px] w-[17px] bg-white" aria-label="255"></button>
                </div>
                <label for="color-name" class="mt-2.5 block">Color:</label>
                <input id="color-name" value="cyan" class="block h-5 w-[189px] border border-[#888] bg-white px-0.5 outline-none">
              </div>
              <div class="relative mt-[9px] h-[60px] w-[83px]">
                <div class="ml-[14px] h-12 bg-white"></div>
                <div class="absolute bottom-0 left-0 h-[49px] w-[68px] bg-[#0ff]"></div>
              </div>
            </div>
          </div>
          <div class="mt-2.5 flex justify-end gap-[5px] pr-2">
            <button class="relative h-[22px] w-[73px] rounded border border-[#7f8cae] bg-[linear-gradient(#fdfdff,#e2e6f2)]">OK
              <svg class="absolute top-1.5 left-[30px]" width="14" height="20" viewBox="0 0 14 20"><path d="M1 1v15l3.500-3 3 6 2.500-1-3-6H12z" fill="#fff" stroke="#111"/></svg>
            </button>
            <button class="h-[22px] w-[73px] rounded border border-[#999] bg-[linear-gradient(#fff,#eaeaec)]">Cancel</button>
            <button class="h-[22px] w-[73px] rounded border border-[#999] bg-[linear-gradient(#fff,#eaeaec)]">Help</button>
          </div>
        </div>
      </div>
    </div>

    <!-- Properties palette -->
    <aside class="flex w-[247px] shrink-0 flex-col border-l-2 border-[#c9c9e4] bg-[#f3f3f5] pl-2 text-[#111]">
      <div class="mt-[7px] flex h-2 items-center">
        <span class="h-2 w-[220px] border-y border-[#aaa]"></span>
        <button class="ml-1.5" aria-label="Close palette"><svg width="8" height="8"><path d="m1 1 6 6M7 1 1 7" stroke="#222" stroke-width="1.500"/></svg></button>
      </div>
      <div class="mt-2.5 flex h-[22px]">
        <div class="relative w-[148px]">
          <select class="h-full w-full appearance-none border border-[#777] bg-white pl-0.5 outline-none" aria-label="Selection"><option>No selection</option></select>
          <span class="pointer-events-none absolute inset-y-0.5 right-0.5 flex w-4 items-center justify-center border-r border-b border-[#888] bg-[#eee]"><svg width="7" height="4"><use href="#dn"/></svg></span>
        </div>
        <button class="ml-1.5 flex w-6 items-center justify-center border border-[#bbb] bg-[#f8f8f8]" aria-label="Toggle pickadd"><svg width="14" height="14" viewBox="0 0 14 14"><path d="M.5.5h13v13H.5zM3 3h8v8H3z" fill="#dfe9fc" stroke="#5f7cc0"/><path d="M7 4v6M4 7h6" stroke="#2f9a20" stroke-width="1.800"/></svg></button>
        <button class="flex w-6 items-center justify-center border border-l-0 border-[#bbb] bg-[#f8f8f8]" aria-label="Select objects"><svg width="16" height="16" viewBox="0 0 16 16"><path d="M5 2h8v7H5z" fill="#7f9ee0" stroke="#5c76b8"/><circle cx="5" cy="8" r="4" fill="url(#gb)" stroke="#5c76b8"/><path d="M8 5v9l2-2 2 3 1.500-1-2-3h3z" fill="#fff" stroke="#222" stroke-width=".8"/></svg></button>
        <button class="flex w-6 items-center justify-center border border-l-0 border-[#bbb] bg-[#f8f8f8]" aria-label="Quick select"><svg width="16" height="16" viewBox="0 0 16 16"><path d="M1 1v12l3-3 3 4 2-1-2-4h4z" fill="#fff" stroke="#333" stroke-width=".9"/><path d="m12 1-6 7h4l-3 7 8-9h-4l4-4z" fill="#ffc030" stroke="#d08a10" stroke-width=".8"/></svg></button>
      </div>

      <div class="mt-3 flex">
        <div class="ml-0.5 flex w-[217px] flex-col gap-[7px]">
          <section>
            <h3 class="flex h-[18px] items-center justify-between rounded-t-lg bg-[#a3a3a3] px-[7px] font-bold text-white">General <svg width="9" height="10"><use href="#chev"/></svg></h3>
            <table class="ml-4 w-[200px] table-fixed border-collapse">
              <tr class="h-[17px]"><th class="w-[82px] border border-t-0 border-[#aaa] p-0 pl-[3px] text-left leading-4 font-normal">Color</th><td class="border border-t-0 border-[#aaa] bg-white p-0 pl-1 leading-4"><span class="flex items-center gap-1"><span class="h-2.5 w-2.5 border border-black"></span>ByLayer</span></td></tr>
              <tr class="h-[17px]"><th class="border border-[#aaa] p-0 pl-[3px] text-left leading-4 font-normal">Layer</th><td class="border border-[#aaa] bg-white p-0 pl-0.5 leading-4">0</td></tr>
              <tr class="h-[17px]"><th class="border border-[#aaa] p-0 pl-[3px] text-left leading-4 font-normal">Linetype</th><td class="border border-[#aaa] bg-white p-0 pl-1 leading-4"><span class="flex items-center gap-1"><span class="h-px w-12 bg-black"></span>ByLayer</span></td></tr>
              <tr class="h-[17px]"><th class="border border-[#aaa] p-0 pl-[3px] text-left leading-4 font-normal">Linetype scale</th><td class="border border-[#aaa] bg-white p-0 pl-0.5 leading-4">1.0000</td></tr>
              <tr class="h-[17px]"><th class="border border-[#aaa] p-0 pl-[3px] text-left leading-4 font-normal">Lineweight</th><td class="border border-[#aaa] bg-white p-0 pl-1 leading-4"><span class="flex items-center gap-1"><span class="h-px w-12 bg-black"></span>ByLayer</span></td></tr>
              <tr class="h-[17px]"><th class="border border-[#aaa] p-0 pl-[3px] text-left leading-4 font-normal">Thickness</th><td class="border border-[#aaa] bg-white p-0 pl-0.5 leading-4">0.0000</td></tr>
            </table>
          </section>
          <section>
            <h3 class="flex h-[18px] items-center justify-between rounded-t-lg bg-[#a3a3a3] px-[7px] font-bold text-white">Plot style <svg width="9" height="10"><use href="#chev"/></svg></h3>
            <table class="ml-4 w-[200px] table-fixed border-collapse">
              <tr class="h-[17px]"><th class="w-[82px] border border-t-0 border-[#aaa] p-0 pl-[3px] text-left leading-4 font-normal">Plot style</th><td class="border border-t-0 border-[#aaa] p-0 pl-0.5 leading-4">ByColor</td></tr>
              <tr class="h-[17px]"><th class="border border-[#aaa] p-0 pl-[3px] text-left leading-4 font-normal">Plot style table</th><td class="border border-[#aaa] bg-white p-0 pl-0.5 leading-4">None</td></tr>
              <tr class="h-[17px]"><th class="border border-[#aaa] p-0 pl-[3px] text-left leading-4 font-normal">Plot table att...</th><td class="border border-[#aaa] p-0 pl-0.5 leading-4">Model</td></tr>
              <tr class="h-[17px]"><th class="border border-[#aaa] p-0 pl-[3px] text-left leading-4 font-normal">Plot table type</th><td class="border border-[#aaa] p-0 pl-0.5 leading-4">Not available</td></tr>
            </table>
          </section>
          <section>
            <h3 class="flex h-[18px] items-center justify-between rounded-t-lg bg-[#a3a3a3] px-[7px] font-bold text-white">View <svg width="9" height="10"><use href="#chev"/></svg></h3>
            <table class="ml-4 w-[200px] table-fixed border-collapse">
              <tr class="h-[17px]"><th class="w-[82px] border border-t-0 border-[#aaa] p-0 pl-[3px] text-left leading-4 font-normal">Center X</th><td class="border border-t-0 border-[#aaa] p-0 pl-0.5 leading-4">142.9071</td></tr>
              <tr class="h-[17px]"><th class="border border-[#aaa] p-0 pl-[3px] text-left leading-4 font-normal">Center Y</th><td class="border border-[#aaa] p-0 pl-0.5 leading-4">159.7056</td></tr>
              <tr class="h-[17px]"><th class="border border-[#aaa] p-0 pl-[3px] text-left leading-4 font-normal">Center Z</th><td class="border border-[#aaa] p-0 pl-0.5 leading-4">0.0000</td></tr>
              <tr class="h-[17px]"><th class="border border-[#aaa] p-0 pl-[3px] text-left leading-4 font-normal">Height</th><td class="border border-[#aaa] p-0 pl-0.5 leading-4">213.2012</td></tr>
              <tr class="h-[17px]"><th class="border border-[#aaa] p-0 pl-[3px] text-left leading-4 font-normal">Width</th><td class="border border-[#aaa] p-0 pl-0.5 leading-4">596.1125</td></tr>
            </table>
          </section>
          <section>
            <h3 class="flex h-[18px] items-center justify-between rounded-t-lg bg-[#a3a3a3] px-[7px] font-bold text-white">Misc <svg width="9" height="10"><use href="#chev"/></svg></h3>
            <table class="ml-4 w-[200px] table-fixed border-collapse">
              <tr class="h-[17px]"><th class="w-[82px] border border-t-0 border-[#aaa] p-0 pl-[3px] text-left leading-4 font-normal">UCS icon On</th><td class="border border-t-0 border-[#aaa] bg-white p-0 pl-0.5 leading-4">Yes</td></tr>
            </table>
          </section>
        </div>
        <div class="ml-auto flex w-[9px] flex-col">
          <button class="flex h-2.5 items-center justify-center bg-[#ddd]" aria-label="Palette up"><svg width="7" height="5"><path d="m.5 4 3-3 3 3" fill="none" stroke="#111" stroke-width="1.500"/></svg></button>
          <span class="h-[300px] bg-[#a2a2a2]"></span>
          <span class="flex-1 bg-white"></span>
          <button class="flex h-2.5 items-center justify-center bg-[#aaa]" aria-label="Palette down"><svg width="7" height="5"><path d="m.5 1 3 3 3-3" fill="none" stroke="#111" stroke-width="1.500"/></svg></button>
        </div>
      </div>
      <div class="mt-1.5 mr-4 ml-[3px] h-8 border border-[#aaa]"></div>
    </aside>
  </main>

  <!-- Command window -->
  <section class="flex h-[63px] border-t border-[#999] bg-[#f1f1f2] pt-2 font-['Liberation_Mono',monospace] text-[13px] leading-[13px] text-black">
    <div class="flex w-4 flex-col items-center gap-1 pt-1">
      <button aria-label="Close command window"><svg class="block" width="7" height="7"><path d="m1 1 5 5M6 1 1 6" stroke="#333" stroke-width="1.500"/></svg></button>
      <span class="w-1.5 flex-1 border-x border-[#aaa]"></span>
    </div>
    <div class="flex min-w-0 flex-1 flex-col border-t-2 border-l-2 border-black bg-white">
      <div class="flex h-[33px] border-b border-[#999]">
        <pre class="flex-1 font-['Liberation_Mono',monospace]">Command:
Command: Cancel!</pre>
        <div class="flex w-4 flex-col bg-[#eee] pt-px pr-px">
          <button class="flex h-[15px] items-center justify-center border border-[#444] bg-[#a0a0a0]" aria-label="History up"><svg width="8" height="5"><path d="m1 4 3-3 3 3" fill="none" stroke="#eee"/></svg></button>
          <button class="flex h-[15px] items-center justify-center border border-[#444] bg-[#999]" aria-label="History down"><svg width="8" height="4"><path d="M0 0h8L4 4z" fill="#ccc"/></svg></button>
        </div>
      </div>
      <div class="flex flex-1 items-center">
        <label for="cmd">Command:</label>
        <input id="cmd" class="h-4 min-w-0 flex-1 outline-none">
        <div class="mr-4 flex h-4 w-[66px] justify-between self-start bg-[#f6f6f6]">
          <button class="flex w-4 items-center justify-center border-r border-b border-[#999] bg-[#eee]" aria-label="Left"><svg width="4" height="6"><path d="M4 0v6L0 3z"/></svg></button>
          <span class="mr-auto w-[17px] border-r border-b border-[#888] bg-[#eee]"></span>
          <button class="flex w-4 items-center justify-center border-r border-b border-[#999] bg-[#eee]" aria-label="Right"><svg width="4" height="6"><path d="M0 0v6l4-3z"/></svg></button>
        </div>
      </div>
    </div>
    <div class="ml-1 w-2.5 bg-[#dcdcee]"></div>
  </section>

  <!-- Status bar -->
  <footer class="flex h-[23px] items-center border-t border-[#aaa] bg-[#ededef] pl-1">
    <output class="mr-[5px] h-[18px] w-[237px] border-t border-r border-l border-[#bbb] pl-0.5 font-['Liberation_Sans',sans-serif] leading-[18px]">297.1150, 266.0606, 0.0000</output>
    <div class="flex gap-1">
      <button class="flex h-[18px] w-5 items-center justify-center border-r border-b border-[#bbb]" aria-label="Snap"><svg width="14" height="14"><path d="M.5.5h13v13H.5zM.5 4h13M.5 7h13M.5 10h13M4 .5v13M7 .5v13M10 .5v13" fill="#e4edff" stroke="#4a6fc0"/></svg></button>
      <button class="flex h-[18px] w-5 items-center justify-center border-r border-b border-[#bbb]" aria-label="Grid"><svg width="13" height="13"><path d="M.5.5h12v12H.5zM.5 4.500h12M.5 8.500h12M4.500.5v12M8.500.5v12" fill="#f0f4ff" stroke="#8292c4"/></svg></button>
      <button class="flex h-[18px] w-5 items-center justify-center border-r border-b border-[#bbb]" aria-label="Ortho"><svg width="14" height="14"><path d="M1.500 1v12H14M1.500 9H5v4" fill="none" stroke="#6a80b8"/></svg></button>
      <button class="flex h-[18px] w-5 items-center justify-center border-t border-l border-[#222] bg-[#f7f7f9]" aria-label="Polar"><svg width="16" height="15" fill="none" stroke="#4a62b8"><path d="M11 3C5 0 1 4 1 8s5 7 10 3M5 9h10M5 9l7-8M12 6v6"/></svg></button>
      <button class="flex h-[18px] w-5 items-center justify-center border-t border-l border-[#222] bg-[#f7f7f9]" aria-label="Object snap"><svg width="14" height="14"><path d="M1.500 1.500h12v12h-12z" fill="#cfdffc" stroke="#7088c4"/><circle cx="2" cy="2" r="1.500" fill="#e04030"/></svg></button>
      <button class="flex h-[18px] w-5 items-center justify-center border-t border-l border-[#222] bg-[#f7f7f9]" aria-label="Tracking"><svg width="14" height="14" stroke="#6a80a0"><path d="M2 13 13 1M1 13h13" fill="none"/><circle cx="7" cy="8" r="1.500" fill="#5a88d8"/></svg></button>
      <button class="flex h-[18px] w-5 items-center justify-center border-t border-l border-[#222] bg-[#f7f7f9]" aria-label="Dynamic input"><svg width="15" height="14"><path d="M5 0v10M0 5h10" stroke="#5064a8"/><path d="M7.500 8.500h6v4h-6z" fill="#b8ccf8" stroke="#6a80c0"/></svg></button>
      <button class="flex h-[18px] w-5 items-center justify-center border-r border-b border-[#bbb]" aria-label="Lineweight"><svg width="15" height="13"><path d="M0 1h15v2H0zM0 5h15v3H0zM0 10h15v3H0z" fill="#4668b0"/></svg></button>
      <button class="flex h-[18px] w-5 items-center justify-center border-t border-l border-[#222] bg-[#f7f7f9]" aria-label="Cycling"><svg width="16" height="15"><path d="M4 0v8M0 4h8" stroke="#444"/><path d="M4.500 5.500h7v6h-7z" fill="#cfdcf8" stroke="#555"/><path d="M8.500 8.500h6v6h-6z" fill="#72c048" stroke="#3a8a20"/></svg></button>
      <button class="flex h-[18px] w-5 items-center justify-center border-t border-l border-[#222] bg-[#f7f7f9]" aria-label="Model space"><svg width="15" height="15"><path d="M4.500 1.500h9v8h-9z" fill="#dfeafc" stroke="#4a74c8"/><path d="M7 4h7M7 7h7M8 2v7M11 2v7" stroke="#4a74c8"/><path d="M1 5h8v8H1z" fill="#5f88dc"/><circle cx="5" cy="9" r="2" fill="#fff"/><path d="M9 10h5v4H9z" fill="#62b838"/></svg></button>
    </div>
    <div class="ml-auto flex items-center">
      <button class="flex items-center gap-1" aria-label="Settings"><svg width="16" height="16" viewBox="0 0 16 16"><circle cx="8" cy="8" r="6.500" fill="#cfdffc" stroke="#7f98d8" stroke-width="2" stroke-dasharray="3 1.500"/><circle cx="8" cy="8" r="2" fill="#fff" stroke="#6a84c8"/></svg><svg width="7" height="4"><use href="#dn"/></svg></button>
      <button class="ml-2 flex h-[17px] w-3.5 items-center justify-center border-t border-l border-black bg-[#f6f6f8]" aria-label="Status menu"><svg width="7" height="4"><path d="M0 0h7L3.500 4z" fill="#1f7a40"/></svg></button>
      <button class="ml-1.5" aria-label="Clean screen"><svg width="16" height="16"><path d="M.5.5h15v15H.5z" fill="#dfe9fc" stroke="#6a88d0"/><path d="m3 3 10 10M13 3 3 13M3 7V3h4M9 3h4v4M13 9v4H9M7 13H3V9" fill="none" stroke="#5577c8" stroke-width="1.300"/></svg></button>
      <svg class="mt-2 ml-2.5" width="10" height="10" fill="#333"><path d="M7 0h2v2H7zM4 4h2v2H4zM7 4h2v2H7zM1 8h2v2H1zM4 8h2v2H4zM7 8h2v2H7z"/></svg>
    </div>
  </footer>
  <div class="h-[4px] border-t border-[#888] bg-[#505050]"></div>
</div>

<script>
  // Index palette: 24 hues in 15-degree steps, five brightness levels per block.
  const levels = [0.3, 0.5, 0.6, 0.8, 1];
  const cell = (h, v, s) => {
    const f = n => { const k = (n + h / 60) % 6; return Math.round(255 * v * (1 - s * Math.max(0, Math.min(k, 4 - k, 1)))); };
    return `rgb(${f(5)},${f(3)},${f(1)})`;
  };
  const fill = (id, vs, s) => {
    const box = document.getElementById(id);
    vs.forEach(v => {
      for (let i = 0; i < 24; i++) {
        const b = document.createElement('button');
        const c = cell(i * 15, v, s);
        b.style.backgroundColor = c;
        b.setAttribute('aria-label', c);
        box.append(b);
      }
    });
  };
  fill('palette-vivid', levels, 1);
  fill('palette-soft', [...levels].reverse(), 0.5);
</script>
</body>
</html>
